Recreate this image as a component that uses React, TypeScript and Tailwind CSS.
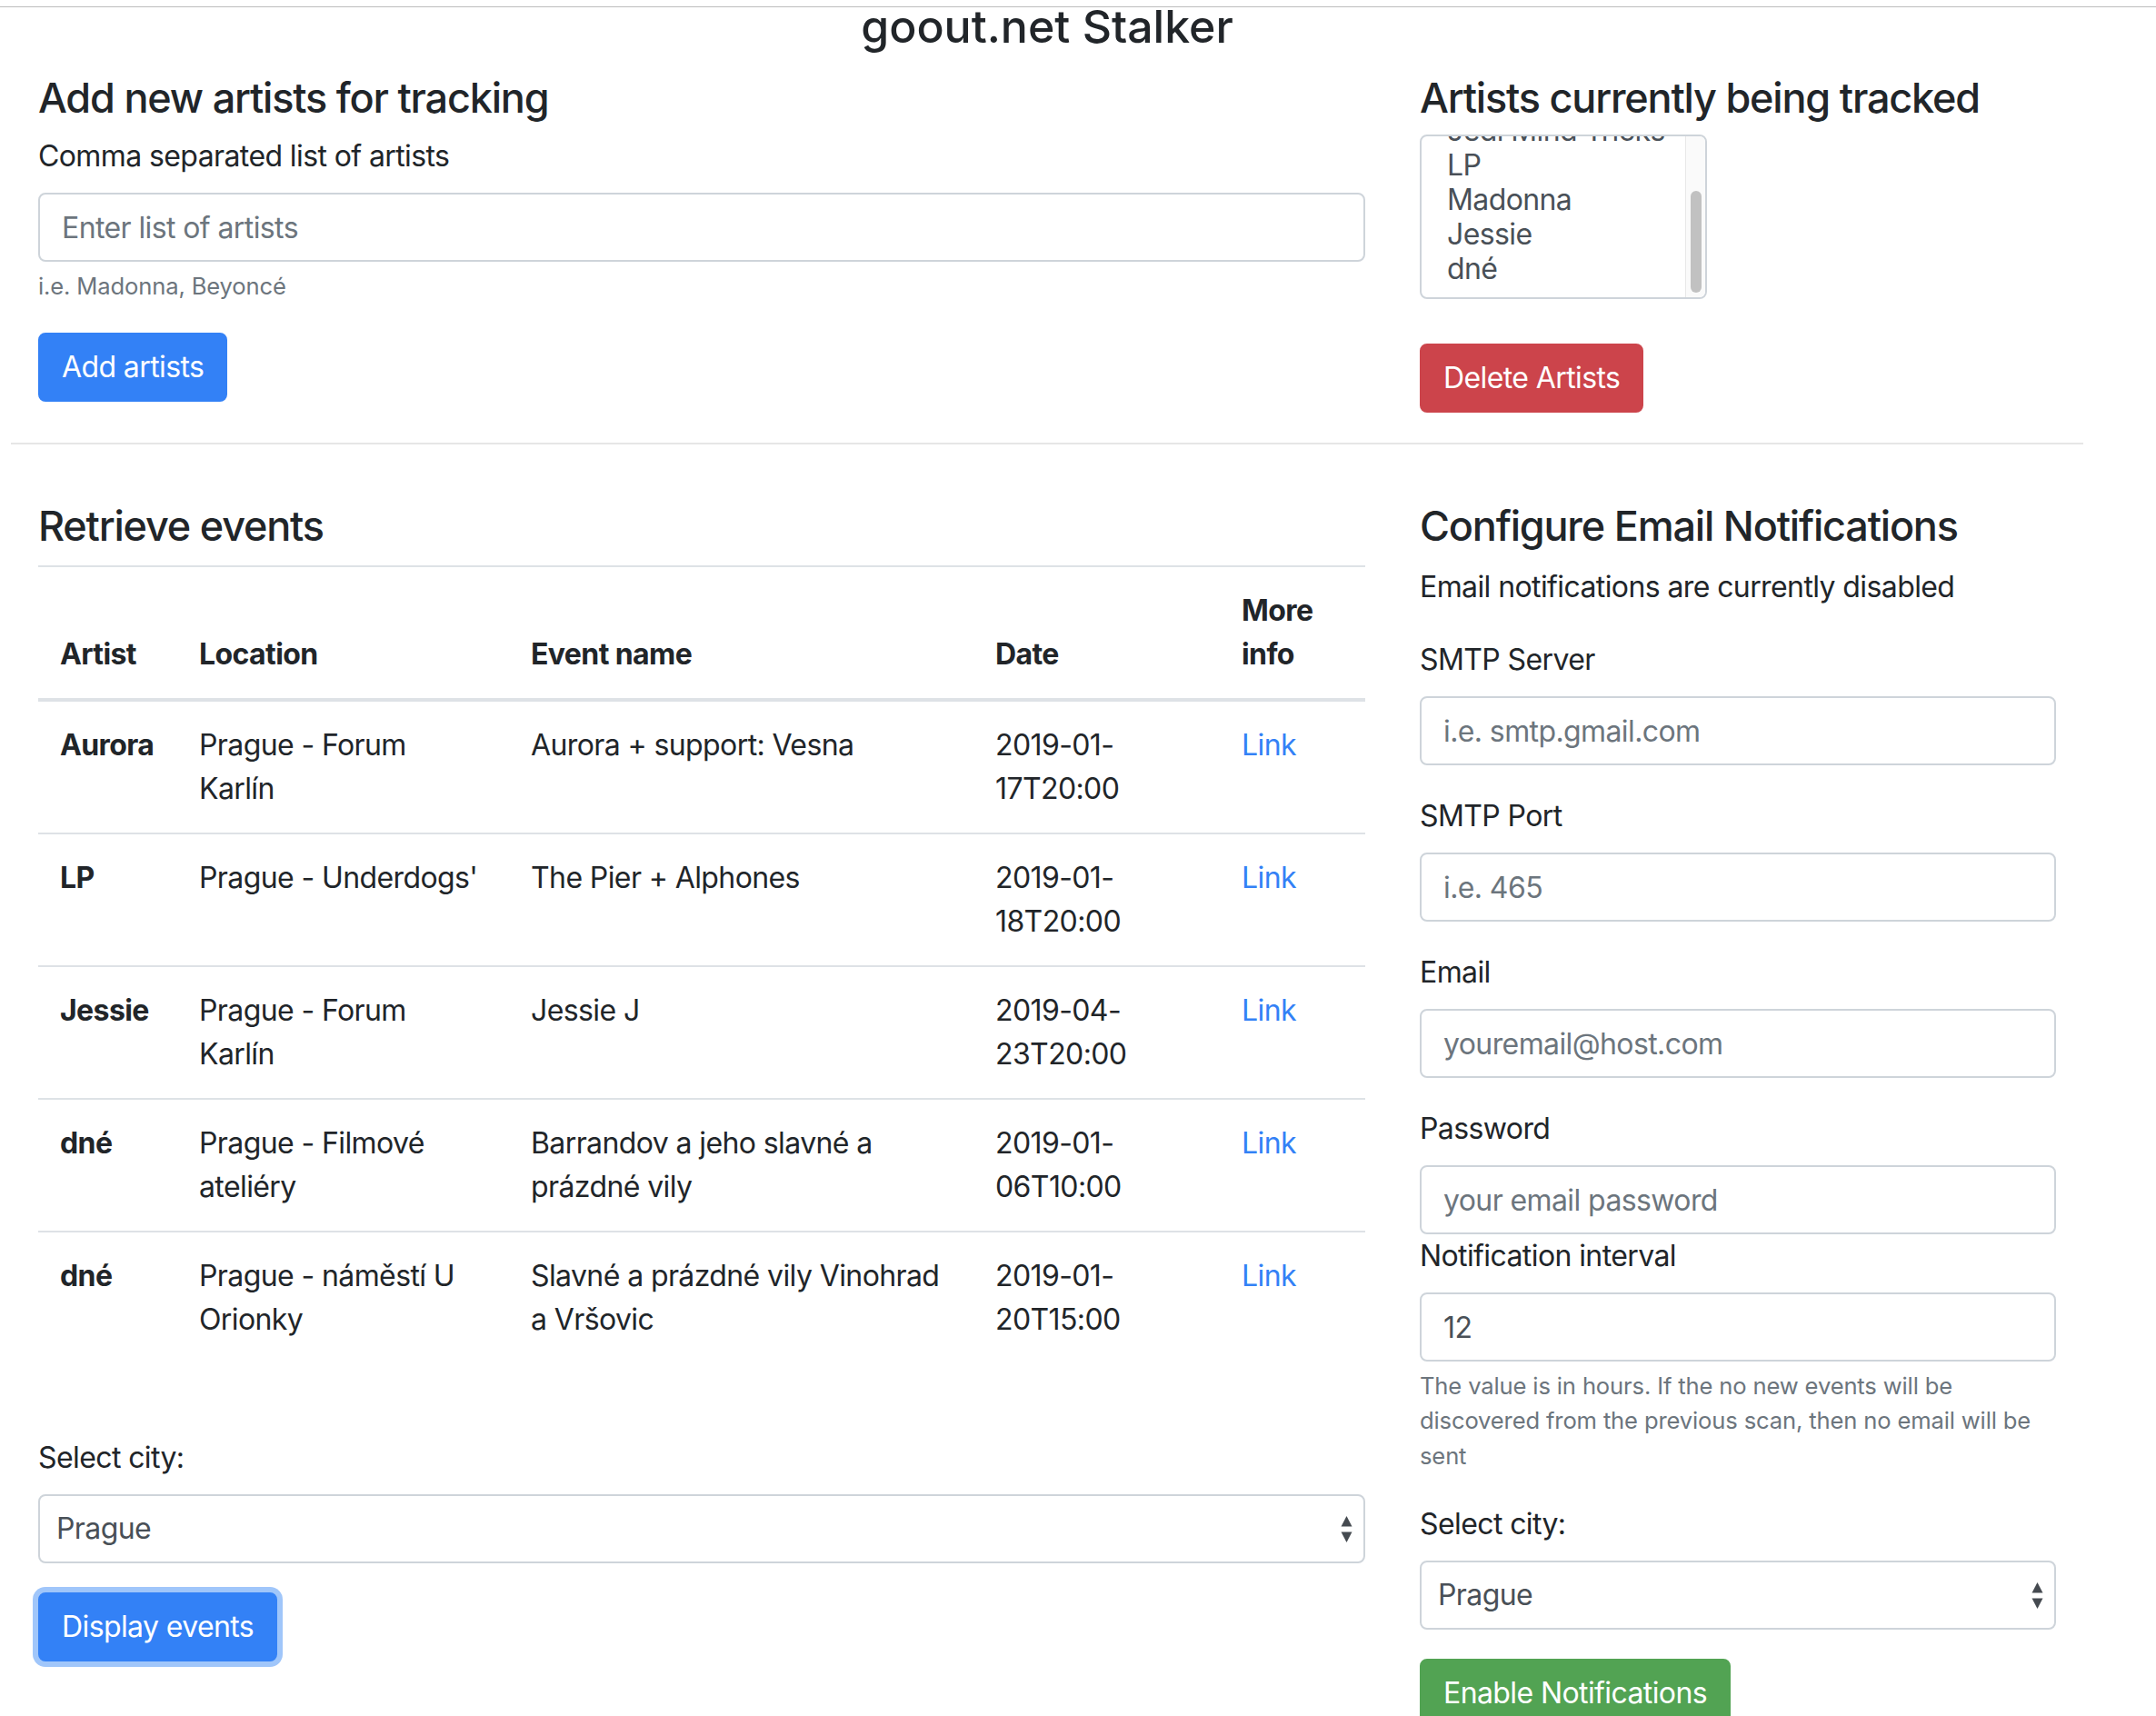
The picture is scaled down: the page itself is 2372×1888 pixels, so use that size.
import { useEffect, useRef } from "react";

const events = [
  { artist: "Aurora", location: ["Prague - Forum", "Karlín"], name: ["Aurora + support: Vesna"], date: ["2019-01-", "17T20:00"] },
  { artist: "LP", location: ["Prague - Underdogs'"], name: ["The Pier + Alphones"], date: ["2019-01-", "18T20:00"] },
  { artist: "Jessie", location: ["Prague - Forum", "Karlín"], name: ["Jessie J"], date: ["2019-04-", "23T20:00"] },
  { artist: "dné", location: ["Prague - Filmové", "ateliéry"], name: ["Barrandov a jeho slavné a", "prázdné vily"], date: ["2019-01-", "06T10:00"] },
  { artist: "dné", location: ["Prague - náměstí U", "Orionky"], name: ["Slavné a prázdné vily Vinohrad", "a Vršovic"], date: ["2019-01-", "20T15:00"] },
];

const tracked = ["Jedi Mind Tricks", "LP", "Madonna", "Jessie", "dné"];

// Lines kept as in the screenshot so wrapping does not depend on the font
function Lines({ lines }: { lines: string[] }) {
  return (
    <>
      {lines.map((l, i) => (
        <span key={i} className="block whitespace-nowrap">
          {l}
        </span>
      ))}
    </>
  );
}

function SelectArrows() {
  return (
    <svg width="13" height="31" viewBox="0 0 13 31" fill="#454a50">
      <path d="M6.5 1 L12.5 12.5 L0.5 12.5 Z" />
      <path d="M0.5 18.5 L12.5 18.5 L6.5 30 Z" />
    </svg>
  );
}

function FakeSelect({ value }: { value: string }) {
  return (
    <div className="flex h-[76px] w-full items-center justify-between rounded-[8px] border-2 border-[#ced4da] bg-white pl-[18px] pr-[12px] text-[32px] text-[#495057]">
      <span>{value}</span>
      <SelectArrows />
    </div>
  );
}

function TextInput({ placeholder, value }: { placeholder?: string; value?: string }) {
  return (
    <input
      type="text"
      placeholder={placeholder}
      defaultValue={value}
      className="block h-[76px] w-full rounded-[8px] border-2 border-[#ced4da] bg-white px-[24px] text-[32px] tracking-[-0.6px] text-[#495057] outline-none placeholder:text-[#6c757d]"
    />
  );
}

function Field({ label, placeholder, last }: { label: string; placeholder: string; last?: boolean }) {
  return (
    <div className={last ? "" : "mb-[32px]"}>
      <label className="mb-[16px] block text-[32px] leading-[48px]">{label}</label>
      <TextInput placeholder={placeholder} />
    </div>
  );
}

function TrackedList() {
  const listRef = useRef<HTMLDivElement>(null);

  // the list is scrolled to the end in the screenshot
  useEffect(() => {
    if (listRef.current) {
      listRef.current.scrollTop = listRef.current.scrollHeight;
    }
  }, []);

  return (
    <div className="flex h-[181px] w-[316px] overflow-hidden rounded-[8px] border-2 border-[#ced4da] bg-white">
      <div
        ref={listRef}
        className="flex-1 overflow-y-scroll py-[12px] pl-[28px] text-[32px] leading-[38px] text-[#495057] [scrollbar-width:none]"
      >
        {tracked.map((a) => (
          <div key={a} className="whitespace-nowrap">
            {a}
          </div>
        ))}
      </div>
      <div className="flex w-[22px] flex-col justify-end border-l border-[#e8e8e8] bg-[#fafafa] pb-[5px] pl-[5px]">
        <div className="h-[112px] w-[12px] rounded-full bg-[#c1c1c1]" />
      </div>
    </div>
  );
}

const heading = "text-[45px] font-medium leading-[58px] tracking-[-1.2px]";
const btn = "rounded-[8px] border-2 px-[24px] py-[12px] text-[32px] leading-[48px] text-white";

export default function App() {
  return (
    <div className="relative min-h-screen bg-white font-['Inter','Liberation_Sans',sans-serif] tracking-[-0.6px] text-[#212529]">
      {/* browser chrome edge above the page */}
      <div className="absolute inset-x-0 top-[7px] h-px bg-[#bdbdbd]" />

      <div className="ml-[12px] w-[2280px]">
        <h1 className="text-center text-[50px] font-medium leading-[58px] tracking-normal">goout.net Stalker</h1>

        {/* Artists */}
        <div className="flex gap-[60px] px-[30px]">
          <div className="w-[1460px]">
            <h2 className={`mt-[21px] mb-[11px] ${heading}`}>Add new artists for tracking</h2>
            <label className="mb-[16px] block text-[32px] leading-[48px]">Comma separated list of artists</label>
            <TextInput placeholder="Enter list of artists" />
            <p className="mt-[8px] text-[25.6px] leading-[38px] tracking-[-0.15px] text-[#6c757d]">i.e. Madonna, Beyoncé</p>
            <button className={`mt-[32px] border-[#3381f6] bg-[#3381f6] ${btn}`}>Add artists</button>
          </div>

          <div className="w-[700px]">
            <h2 className={`mt-[21px] mb-[11px] ${heading}`}>Artists currently being tracked</h2>
            <TrackedList />
            <button className={`mt-[49px] border-[#cc444b] bg-[#cc444b] ${btn}`}>Delete Artists</button>
          </div>
        </div>

        <hr className="mt-[33px] border-t-2 border-[#e6e6e6]" />

        {/* Events + notifications */}
        <div className="flex gap-[60px] px-[30px]">
          <div className="w-[1460px]">
            <h2 className={`mt-[61px] mb-[14px] ${heading}`}>Retrieve events</h2>
            <table className="w-full table-fixed border-collapse text-[32px] leading-[48px]">
              <colgroup>
                <col className="w-[153px]" />
                <col className="w-[365px]" />
                <col className="w-[511px]" />
                <col className="w-[271px]" />
                <col className="w-[160px]" />
              </colgroup>
              <thead>
                <tr>
                  {[["Artist"], ["Location"], ["Event name"], ["Date"], ["More", "info"]].map((h) => (
                    <th
                      key={h[0]}
                      className="border-t-2 border-b-4 border-[#dee2e6] p-[24px] text-left align-bottom font-bold"
                    >
                      <Lines lines={h} />
                    </th>
                  ))}
                </tr>
              </thead>
              <tbody>
                {events.map((e, i) => (
                  <tr key={i}>
                    <th className="border-t-2 border-[#dee2e6] p-[24px] text-left align-top font-bold">{e.artist}</th>
                    <td className="border-t-2 border-[#dee2e6] p-[24px] align-top">
                      <Lines lines={e.location} />
                    </td>
                    <td className="border-t-2 border-[#dee2e6] p-[24px] align-top">
                      <Lines lines={e.name} />
                    </td>
                    <td className="border-t-2 border-[#dee2e6] p-[24px] align-top">
                      <Lines lines={e.date} />
                    </td>
                    <td className="border-t-2 border-[#dee2e6] p-[24px] align-top">
                      <a href="#" className="text-[#3381f6]">
                        Link
                      </a>
                    </td>
                  </tr>
                ))}
              </tbody>
            </table>

            <label className="mt-[80px] mb-[16px] block text-[32px] leading-[48px]">Select city:</label>
            <FakeSelect value="Prague" />
            <button className={`mt-[32px] border-[#3381f6] bg-[#3381f6] ring-[6px] ring-[#a0c6fa] ${btn}`}>
              Display events
            </button>
          </div>

          <div className="w-[700px]">
            <h2 className={`mt-[61px] mb-[14px] ${heading}`}>Configure Email Notifications</h2>
            <p className="mb-[32px] text-[32px] leading-[48px]">Email notifications are currently disabled</p>
            <Field label="SMTP Server" placeholder="i.e. smtp.gmail.com" />
            <Field label="SMTP Port" placeholder="i.e. 465" />
            <Field label="Email" placeholder="youremail@host.com" />
            <Field label="Password" placeholder="your email password" last />
            <label className="mb-[16px] block text-[32px] leading-[48px]">Notification interval</label>
            <TextInput value="12" />
            <p className="mt-[8px] text-[25.6px] leading-[38.4px] tracking-[-0.15px] text-[#6c757d]">
              <span className="block whitespace-nowrap">The value is in hours. If the no new events will be</span>
              <span className="block whitespace-nowrap">discovered from the previous scan, then no email will be</span>
              <span className="block whitespace-nowrap">sent</span>
            </p>
            <label className="mt-[32px] mb-[16px] block text-[32px] leading-[48px]">Select city:</label>
            <FakeSelect value="Prague" />
            <button className={`mt-[32px] border-[#52a353] bg-[#52a353] ${btn}`}>Enable Notifications</button>
          </div>
        </div>
      </div>
    </div>
  );
}
